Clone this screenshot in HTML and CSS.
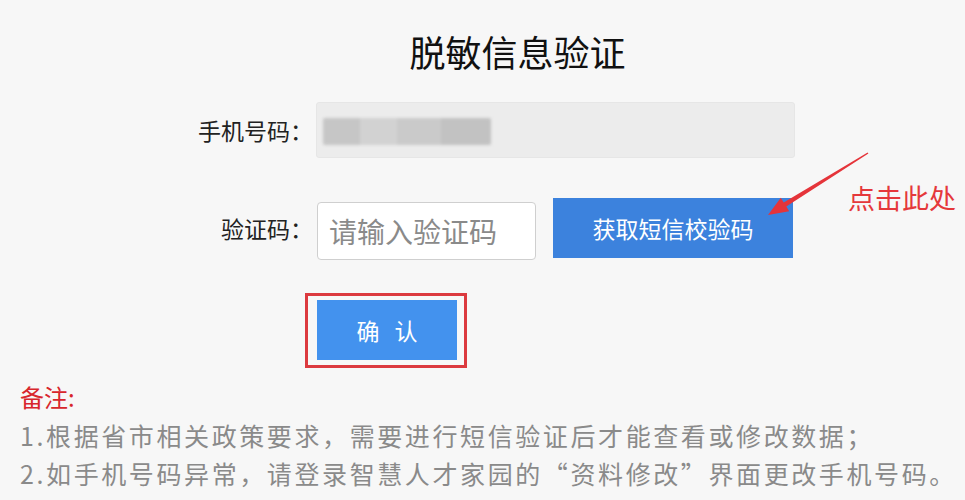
FILE: index.html
```html
<!DOCTYPE html>
<html lang="zh-CN">
<head>
  <meta charset="UTF-8">
  <meta name="viewport" content="width=device-width, initial-scale=1.0">
  <title>脱敏信息验证</title>
  <link rel="stylesheet" href="styles.css">
</head>
<body>
  <div class="page">
    <h1 class="title">脱敏信息验证</h1>

    <!-- Verify form -->
    <div class="form">
      <label class="label">手机号码：</label>
      <div class="phone-field"><span class="phone-mask"></span></div>

      <label class="label label-code">验证码：</label>
      <div class="code-row">
        <input class="code-input" type="text" placeholder="请输入验证码">
        <button class="btn-send">获取短信校验码</button>
      </div>
    </div>

    <div class="confirm-frame">
      <button class="btn-confirm">确 认</button>
    </div>

    <!-- Notes -->
    <div class="notes">
      <p class="notes-title">备注:</p>
      <p>1.根据省市相关政策要求，需要进行短信验证后才能查看或修改数据；</p>
      <p>2.如手机号码异常，请登录智慧人才家园的“资料修改”界面更改手机号码。</p>
    </div>

    <!-- Annotation -->
    <svg class="hint-arrow" width="115" height="80" viewBox="0 0 115 80">
      <polygon points="107.6,7.4 23.7,57.4 20.8,52.7 8,70 29.2,66.3 26.3,61.6 108.4,8.6" fill="#e5343a"/>
    </svg>
    <span class="hint-text">点击此处</span>
  </div>
</body>
</html>
```

FILE: styles.css
```css
* { margin: 0; padding: 0; box-sizing: border-box; }
body { font-family: 'Noto Sans CJK SC', sans-serif; background: #f7f7f7; color: #222; }
.page { position: relative; width: 965px; height: 500px; overflow: hidden; }

.title { padding: 26px 0 0 70px; font-size: 36px; line-height: 50px; font-weight: 400; color: #111; text-align: center; }

.form { display: grid; grid-template-columns: 313px 479px; column-gap: 3px; margin-top: 26px; }
.label { font-size: 23px; line-height: 56px; text-align: right; color: #222; }
.label-code { margin-top: 39px; line-height: 62px; }
.phone-field { height: 56px; background: #ececec; border: 1px solid #e6e6e6; border-radius: 3px; padding: 15px 0 0 6px; }
.phone-mask { display: block; width: 168px; height: 27px; background: linear-gradient(90deg, #c6c6c6 0 22%, #d2d2d2 22% 44%, #cacaca 44% 70%, #c2c2c2 70%); filter: blur(1.5px); border-radius: 2px; }

.code-row { display: flex; gap: 17px; margin-top: 39px; margin-left: 1px; align-items: flex-start; }
.code-input { width: 219px; height: 58px; margin-top: 5px; padding-left: 11px; border: 1px solid #cfcfcf; border-radius: 4px; background: #fff; font-family: inherit; font-size: 28px; color: #333; outline: none; }
.code-input::placeholder { color: #8a8a8a; }
.btn-send { width: 240px; height: 60px; margin-top: 1px; border: none; background: #3c82dd; color: #fff; font-family: inherit; font-size: 23px; cursor: pointer; }

.confirm-frame { width: 162px; height: 75px; margin: 33px 0 0 305px; padding: 4px 0 0 9px; border: 3px solid #dc3a3f; }
.btn-confirm { width: 140px; height: 60px; border: none; background: #4392ee; color: #fff; font-family: inherit; font-size: 23px; word-spacing: 10px; cursor: pointer; }

.notes { margin-top: 10px; padding-left: 20px; font-size: 25px; line-height: 38px; letter-spacing: 2.6px; color: #8a8a8a; white-space: nowrap; }
.notes .notes-title { color: #d8262c; font-size: 24px; letter-spacing: 0; }

.hint-arrow { position: absolute; left: 760px; top: 145px; }
.hint-text { position: absolute; left: 848px; top: 178px; font-size: 27px; line-height: 40px; color: #e5383b; }
```
